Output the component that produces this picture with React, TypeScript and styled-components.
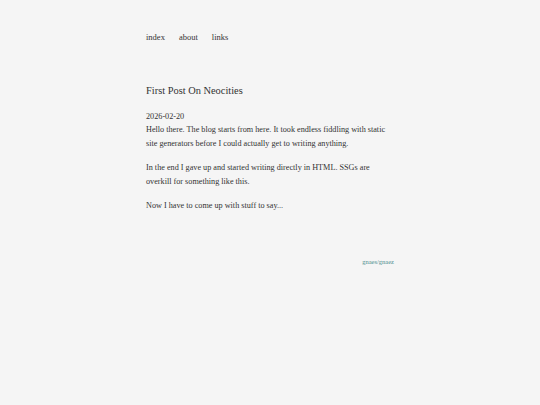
import * as React from 'react';
import styled, { createGlobalStyle } from 'styled-components';

const GlobalStyle = createGlobalStyle`
  html, body {
    margin: 0;
    padding: 0;
    background: #f5f5f5;
  }
  body {
    font-family: "Liberation Serif", "DejaVu Serif", serif;
    color: #333333;
  }
`;

const Page = styled.div`
  width: 248px;
  margin: 0 auto;
  padding-top: 31px;
`;

const Nav = styled.nav`
  display: flex;
  gap: 14px;
  font-size: 8.5px;
  line-height: 12px;
`;

const NavLink = styled.a`
  color: #333333;
  text-decoration: none;
`;

const Title = styled.h1`
  margin: 41px 0 0;
  font-size: 10.4px;
  font-weight: normal;
  line-height: 14px;
`;

const Date = styled.div`
  margin-top: 13px;
  font-size: 8.2px;
  line-height: 12px;
`;

const Para = styled.p`
  margin: 0 0 10px;
  font-size: 8.2px;
  line-height: 14px;
`;

const Footer = styled.footer`
  display: flex;
  justify-content: flex-end;
  margin-top: 45px;
  font-size: 6.5px;
`;

const FooterLink = styled.a`
  color: #4f8f8f;
  text-decoration: none;
`;

export default function App() {
  return (
    <>
      <GlobalStyle />
      <Page>
        <Nav>
          <NavLink href="#">index</NavLink>
          <NavLink href="#">about</NavLink>
          <NavLink href="#">links</NavLink>
        </Nav>
        <Title>First Post On Neocities</Title>
        <Date>2026-02-20</Date>
        <Para>
          Hello there. The blog starts from here. It took endless fiddling with static
          site generators before I could actually get to writing anything.
        </Para>
        <Para>
          In the end I gave up and started writing directly in HTML. SSGs are overkill
          for something like this.
        </Para>
        <Para>Now I have to come up with stuff to say...</Para>
        <Footer>
          <FooterLink href="#">gnaes/gnaez</FooterLink>
        </Footer>
      </Page>
    </>
  );
}
